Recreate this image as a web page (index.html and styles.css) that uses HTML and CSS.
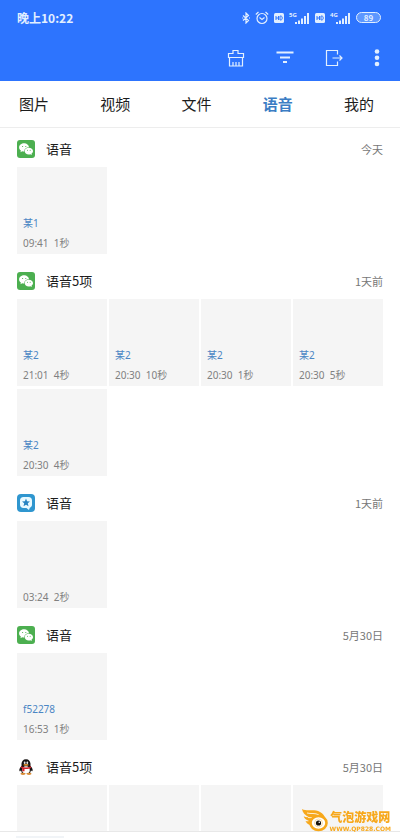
FILE: index.html
```html
<!DOCTYPE html>
<html lang="zh-CN">
<head>
<meta charset="utf-8">
<meta name="viewport" content="width=device-width, initial-scale=1">
<title>语音</title>
<link rel="stylesheet" href="styles.css">
</head>
<body>
<svg class="defs" aria-hidden="true">
  <symbol id="wechat" viewBox="0 0 18 18">
    <rect width="18" height="18" rx="3" fill="#4caf50"/>
    <path d="M7.300 3.300c-3 0-5.200 1.800-5.200 4.100 0 1.300.7 2.400 1.800 3.200l-.5 1.600 1.900-1c.6.2 1.100.2 1.800.2.1-2.500 2-4.200 4.900-4.200-.3-2.200-2.300-3.900-4.700-3.900z" fill="#fff"/>
    <path d="M11.800 7.700c2.400 0 4.200 1.500 4.200 3.400 0 1.100-.5 2-1.500 2.600l.4 1.400-1.600-.8c-.5.100-1 .2-1.500.2-2.400 0-4.200-1.500-4.200-3.400s1.800-3.400 4.200-3.400z" fill="#fff"/>
    <g fill="#4caf50"><circle cx="5.600" cy="6.500" r=".6"/><circle cx="8.800" cy="6.500" r=".6"/><circle cx="10.500" cy="10.200" r=".5"/><circle cx="13.200" cy="10.200" r=".5"/></g>
  </symbol>
  <symbol id="star" viewBox="0 0 18 18">
    <rect width="18" height="18" rx="4" fill="#2f96cf"/>
    <path d="M6.500 3h5c2.200 0 3.500 1.300 3.500 3.500v4c0 1.600-.8 2.900-2.200 3.300L12 16l-2.600-2H6.500C4.300 14 3 12.700 3 10.500v-4C3 4.300 4.300 3 6.500 3z" fill="#e9faff"/>
    <path d="m9 4.500 1.100 2.700 2.900.2-2.200 1.900.7 2.900L9 10.700l-2.500 1.500.7-2.900L5 7.400l2.900-.2z" fill="#2784c2"/>
  </symbol>
  <symbol id="hd" viewBox="0 0 10 10">
    <rect width="10" height="10" rx="1.500" fill="#e2efff"/>
    <path d="M2 3v4M4.500 3v4M2 5h2.500M6 3v4h.7c1 0 1.500-.7 1.500-2s-.5-2-1.500-2z" fill="none" stroke="#2d74fe"/>
  </symbol>
  <symbol id="bars" viewBox="0 0 15 11">
    <path d="M1 9v2M4 7.500V11M7 5.500V11M10 3v8M13 0v11" fill="none" stroke="#e2efff" stroke-width="2"/>
  </symbol>
</svg>

<header class="top">
  <div class="status">
    <time>晚上10:22</time>
    <div class="signals">
      <svg class="bt" viewBox="0 0 8 12"><path d="M1 3.500 6.500 8.500 4 11V1l2.500 2.500L1 8.500M.2 6h1M7 6h1" fill="none" stroke="currentColor" stroke-width="1.200"/></svg>
      <svg class="alarm" viewBox="0 0 14 14"><g fill="none" stroke="currentColor" stroke-width="1.200"><circle cx="7" cy="7.500" r="5"/><path d="M.8 3.500 3.500 1M13.200 3.500 10.500 1M4.500 6.500 7 8.500l2.500-2"/></g></svg>
      <svg class="hd"><use href="#hd"/></svg>
      <span class="cell"><small>5G</small><svg><use href="#bars"/></svg></span>
      <svg class="hd"><use href="#hd"/></svg>
      <span class="cell"><small>4G</small><svg><use href="#bars"/></svg></span>
      <span class="battery"><b>89</b></span>
    </div>
  </div>
  <div class="actions">
    <button aria-label="清理"><svg viewBox="0 0 18 18"><path d="M1.500 9V4.500H6V1.500h5v3h5.500V9M1.500 8.500h15M2.500 8.500V17h13V8.500M6 17v-4M9 17v-4M12 17v-4" fill="none" stroke="currentColor" stroke-width="1.200"/></svg></button>
    <button aria-label="筛选"><svg viewBox="0 0 18 18"><path d="M.5 3.500h17M4 8.500h10M7 13h4" fill="none" stroke="currentColor" stroke-width="1.800"/></svg></button>
    <button aria-label="导出"><svg viewBox="0 0 18 18"><path d="M12.500 5.500v-4h-11v15h11v-4M7.500 9h9.500M14.500 6.500 17 9l-2.500 2.500" fill="none" stroke="currentColor" stroke-width="1.200"/></svg></button>
    <button class="more" aria-label="更多"><svg viewBox="0 0 6 18"><g fill="currentColor"><circle cx="3" cy="2.500" r="2.300"/><circle cx="3" cy="8.700" r="2.300"/><circle cx="3" cy="15" r="2.300"/></g></svg></button>
  </div>
</header>

<nav class="tabs">
  <a href="#">图片</a><a href="#">视频</a><a href="#">文件</a><a href="#" class="active" aria-current="page">语音</a><a href="#">我的</a>
</nav>

<main class="list">
  <section>
    <div class="head"><svg><use href="#wechat"/></svg><h2>语音</h2><time>今天</time></div>
    <div class="grid"><article><a href="#">某1</a><p>09:41&nbsp; 1秒</p></article></div>
  </section>
  <section>
    <div class="head"><svg><use href="#wechat"/></svg><h2>语音5项</h2><time>1天前</time></div>
    <div class="grid">
      <article><a href="#">某2</a><p>21:01&nbsp; 4秒</p></article>
      <article><a href="#">某2</a><p>20:30&nbsp; 10秒</p></article>
      <article><a href="#">某2</a><p>20:30&nbsp; 1秒</p></article>
      <article><a href="#">某2</a><p>20:30&nbsp; 5秒</p></article>
      <article><a href="#">某2</a><p>20:30&nbsp; 4秒</p></article>
    </div>
  </section>
  <section>
    <div class="head"><svg><use href="#star"/></svg><h2>语音</h2><time>1天前</time></div>
    <div class="grid"><article><p>03:24&nbsp; 2秒</p></article></div>
  </section>
  <section>
    <div class="head"><svg><use href="#wechat"/></svg><h2>语音</h2><time>5月30日</time></div>
    <div class="grid"><article><a href="#">f52278</a><p>16:53&nbsp; 1秒</p></article></div>
  </section>
  <section>
    <div class="head">
      <svg viewBox="0 0 18 18">
        <path d="M4.500 8C2.500 10 1.800 12 2.700 13.200c.5.200 1-.5 1.300-1l1 3h8l1-3c.4.500.900 1.200 1.300 1 .900-1.200.2-3.200-1.800-5.200z" fill="#171313"/>
        <path d="M9 1.200c-3 0-4.500 2.200-4.500 5V9h9V6.200c0-2.800-1.500-5-4.500-5z" fill="#171313"/>
        <ellipse cx="9" cy="12" rx="3.800" ry="3.800" fill="#fff"/>
        <ellipse cx="6" cy="15.800" rx="2.600" ry="1.100" fill="#d98b35"/><ellipse cx="12" cy="15.800" rx="2.600" ry="1.100" fill="#d98b35"/>
        <ellipse cx="7.700" cy="4.700" rx=".9" ry="1.300" fill="#fff"/><ellipse cx="10.300" cy="4.700" rx=".9" ry="1.300" fill="#fff"/>
        <circle cx="8" cy="4.900" r=".4"/><circle cx="10" cy="4.900" r=".4"/>
        <ellipse cx="9" cy="6.900" rx="2.700" ry=".8" fill="#e99a35"/>
        <path d="M4.200 8.200c3 1.600 6.600 1.600 9.600 0l.4 1.500c-2.200 1.300-4.700 1.600-6.700 1.300v2.200H5.300v-2.800l-1.400-.7z" fill="#d3222b"/>
      </svg>
      <h2>语音5项</h2><time>5月30日</time>
    </div>
    <div class="grid"><article></article><article></article><article></article><article></article></div>
  </section>
</main>
<footer class="bottom"><span></span></footer>

<div class="mark">
  <svg viewBox="0 0 26 24">
    <path d="M0 1c5 3 12-.5 18 3 3 1.700 4.500 3.800 5 6L8 17c-2.500-1-4-2.500-4.500-4 1.500.5 2.500.4 3.500 0C4 12 2.200 10.300 1.700 8.300c1.700.8 3.500 1 5 .7C3 7.500.5 4.500 0 1z" fill="#f7a81b"/>
    <path d="M5 5c4 1.200 8-.5 12 2M6 9.500c3 .5 5-.5 8 0" fill="none" stroke="#fff" stroke-width=".8"/>
    <ellipse cx="16.500" cy="15" rx="8" ry="7" fill="#fff" stroke="#f7a81b" stroke-width="2.600"/>
    <circle cx="16.500" cy="15" r="4" fill="none" stroke="#f5c66b" stroke-width=".6"/>
    <circle cx="16.500" cy="15" r="2.600" fill="#17120c"/><circle cx="17.300" cy="14.200" r=".8" fill="#fff"/>
  </svg>
  <div><strong>气泡游戏网</strong><span>WWW.QP828.COM</span></div>
</div>
</body>
</html>
```
FILE: styles.css
```css
* { box-sizing: border-box; margin: 0; padding: 0; }
body {
  display: flex;
  flex-direction: column;
  height: 100vh;
  overflow: hidden;
  background: #fff;
  color: #1c1c1c;
  font-family: "Noto Sans CJK SC", sans-serif;
}
a { color: inherit; text-decoration: none; }
svg { display: block; flex: none; }
.defs { position: absolute; width: 0; height: 0; }

.top { flex: none; background: #2d74fe; color: #e2efff; }
.status {
  display: flex;
  align-items: center;
  justify-content: space-between;
  height: 35px;
  padding: 0 19px 0 17px;
}
.status time { font-size: 12px; font-weight: 700; }
.signals { display: flex; align-items: center; gap: 5px; }
.bt { width: 8px; height: 12px; }
.alarm { width: 14px; height: 14px; }
.hd { width: 10px; height: 10px; }
.cell { display: flex; align-items: flex-end; height: 12px; }
.cell small {
  align-self: flex-start;
  width: 6px;
  overflow: visible;
  font: 700 6px/6px "Noto Sans", sans-serif;
}
.cell svg { width: 15px; height: 11px; }
.battery {
  display: flex;
  align-items: center;
  justify-content: center;
  width: 25px;
  height: 11px;
  border: 1px solid #e2efff;
  border-radius: 6px;
  background: #5d97ff;
  font-size: 8px;
  line-height: 8px;
}
.actions {
  display: flex;
  align-items: center;
  justify-content: flex-end;
  gap: 31px;
  height: 46px;
  padding: 0 20px 0 0;
}
.actions button { border: 0; background: none; color: #e2efff; }
.actions svg { width: 18px; height: 18px; }
.actions .more svg { width: 6px; }

.tabs {
  display: flex;
  flex: none;
  align-items: center;
  justify-content: space-between;
  height: 47px;
  padding: 0 26px 2px 19px;
  border-bottom: 1px solid #ededed;
  font-size: 15px;
}
.tabs .active { color: #3b7dc4; font-weight: 700; }

.list { flex: 1; min-height: 0; overflow: hidden; padding: 3px 17px 0; }
section { padding-bottom: 9px; }
.head { display: flex; align-items: center; height: 36px; }
.head svg { width: 18px; height: 18px; }
.head h2 { margin-left: 11px; font-size: 13px; font-weight: 400; line-height: 18px; }
.head time { margin-left: auto; color: #777; font-size: 11px; }
.grid { display: grid; grid-template-columns: repeat(4, 1fr); gap: 3px 2px; }
article {
  display: flex;
  flex-direction: column;
  justify-content: flex-end;
  gap: 4px;
  height: 87px;
  padding: 0 0 3px 6px;
  background: #f5f5f5;
  font-family: "Noto Sans", "Noto Sans CJK SC", sans-serif;
  font-size: 10px;
  line-height: 16px;
  white-space: nowrap;
}
article a { color: #4b86c4; }
article p { color: #808080; }

.bottom { flex: none; height: 7px; padding: 4px 16px 0; border-top: 1px solid #e8e8e8; }
.bottom span { display: block; width: 48px; height: 2px; background: #f1f4f7; }

.mark {
  position: fixed;
  right: 9px;
  bottom: 6px;
  display: flex;
  align-items: flex-end;
  gap: 2px;
  color: #f7a81b;
}
.mark svg { width: 26px; height: 24px; }
.mark div { display: flex; flex-direction: column; align-items: center; }
.mark strong { font-size: 12px; font-weight: 900; line-height: 18px; }
.mark span { font: 700 6px/6px "DejaVu Sans", sans-serif; }
```
